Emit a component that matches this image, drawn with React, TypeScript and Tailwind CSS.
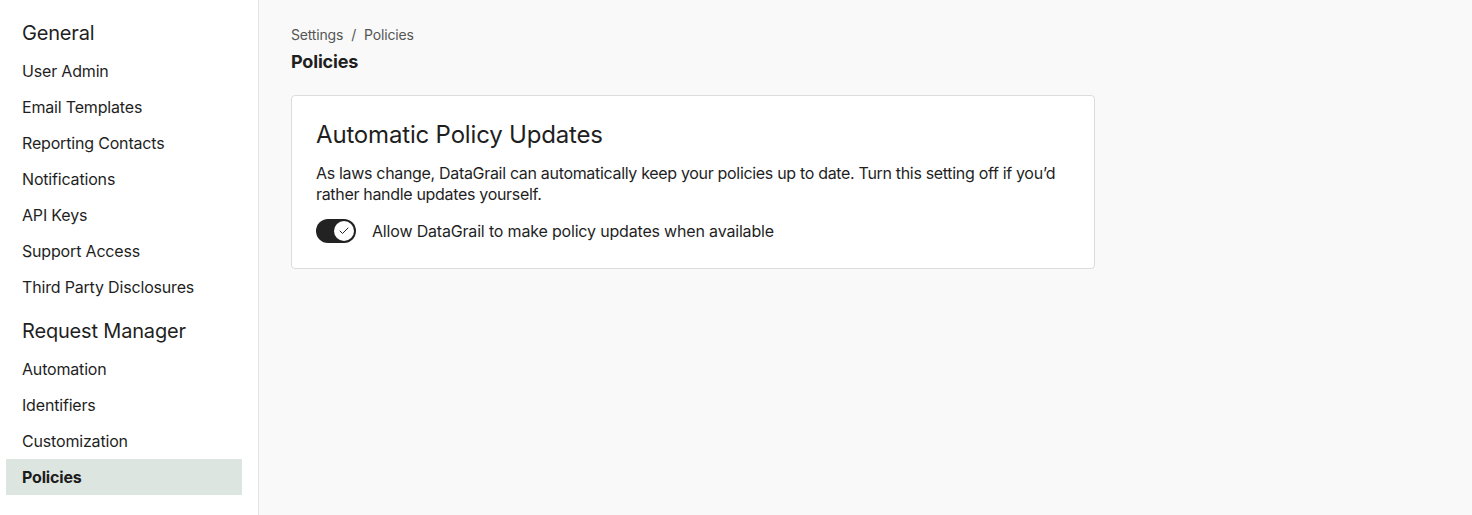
import { Check } from "lucide-react";

const general = [
  "User Admin",
  "Email Templates",
  "Reporting Contacts",
  "Notifications",
  "API Keys",
  "Support Access",
  "Third Party Disclosures",
];
const requestManager = ["Automation", "Identifiers", "Customization", "Policies"];

function NavItem({ label, active }: { label: string; active?: boolean }) {
  return (
    <div
      className={`h-9 flex items-center px-4 text-base ${
        active ? "bg-[#dce5df] font-bold text-[#1c1c1c]" : "text-[#1f1f1f]"
      }`}
    >
      {label}
    </div>
  );
}

export default function App() {
  return (
    <div
      className="flex w-full h-[515px] bg-[#f8f9f8] text-[#1f1f1f] tracking-[-0.011em]"
      style={{ fontFamily: "Inter, 'Liberation Sans', sans-serif" }}
    >
      <aside className="w-[259px] shrink-0 bg-white border-r border-[#e2e4e3] pl-1.5 pr-4 pt-4">
        <div className="h-[37px] flex items-center pb-[3px] px-4 text-xl text-[#1f1f1f]">General</div>
        {general.map((g) => (
          <NavItem key={g} label={g} />
        ))}
        <div className="h-[46px] flex items-center px-4 text-xl text-[#1f1f1f] pt-[6px]">Request Manager</div>
        {requestManager.map((g) => (
          <NavItem key={g} label={g} active={g === "Policies"} />
        ))}
      </aside>
      <main className="flex-1 pl-8 pt-[25px]">
        <div className="flex items-center gap-2 text-sm text-[#555] h-5">
          <span>Settings</span>
          <span>/</span>
          <span>Policies</span>
        </div>
        <h1 className="text-lg font-bold mt-[5px] leading-6">Policies</h1>
        <section className="mt-[21px] w-[804px] bg-white border border-[#dcdcdc] rounded px-6 pt-[23px] pb-[25px]">
          <h2 className="text-2xl leading-8">Automatic Policy Updates</h2>
          <p className="mt-3 text-base leading-[21px] tracking-[-0.02em]">
            As laws change, DataGrail can automatically keep your policies up to date. Turn this setting off if you’d
            rather handle updates yourself.
          </p>
          <div className="flex items-center gap-4 mt-[14px]">
            <div className="w-10 h-6 rounded-full bg-[#222] flex items-center justify-end pr-0.5">
              <div className="w-5 h-5 rounded-full bg-white flex items-center justify-center">
                <Check size={12} strokeWidth={2} className="text-[#222]" />
              </div>
            </div>
            <span className="text-base">Allow DataGrail to make policy updates when available</span>
          </div>
        </section>
      </main>
    </div>
  );
}
